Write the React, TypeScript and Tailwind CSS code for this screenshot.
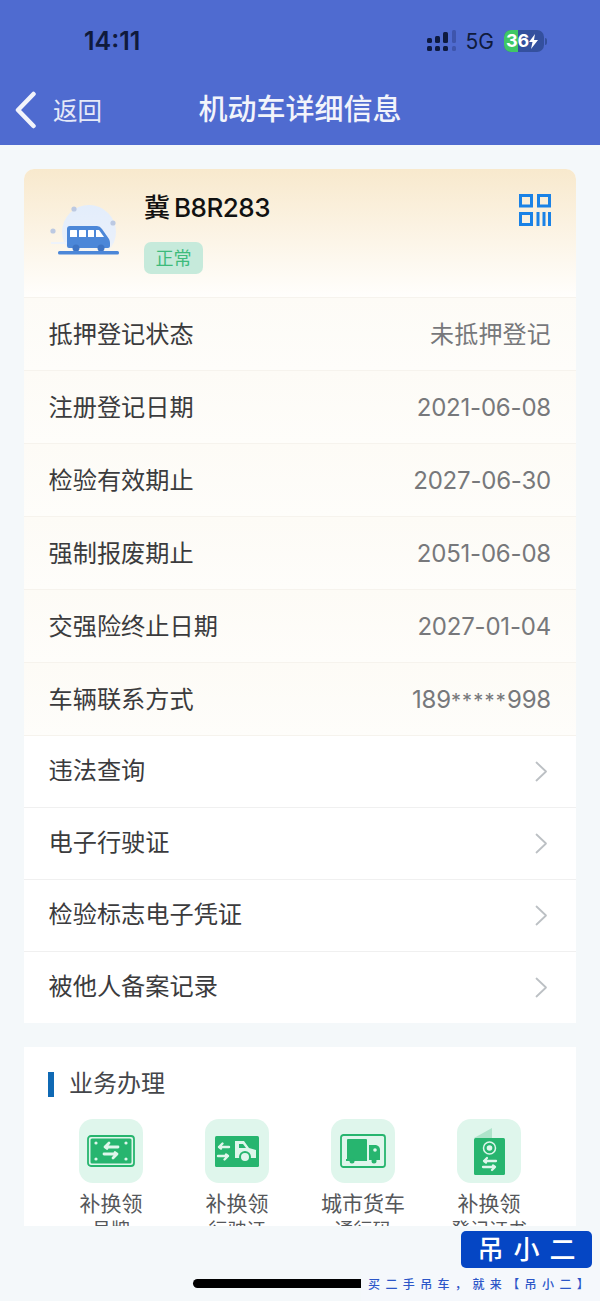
import React from "react";

const cjk = "font-['Inter','Noto_Sans_CJK_SC',sans-serif]";

function Chevron() {
  return (
    <svg width="13" height="21" viewBox="0 0 13 21" fill="none">
      <path d="M1.500 1.500l9.500 9-9.500 9" stroke="#bcc0c4" strokeWidth="1.800" strokeLinecap="round" strokeLinejoin="round" />
    </svg>
  );
}

function InfoRow({ label, value }: { label: string; value: React.ReactNode }) {
  return (
    <div className="flex items-center justify-between pl-[24.500px] pr-[25px] pt-[2px] h-[73px] border-b border-[#f6f3ed] bg-gradient-to-b from-[#fdfbf6] to-[#fefdfa]">
      <span className="text-[24.200px] text-[#3b3b3d]">{label}</span>
      <span className="text-[24px] text-[#77787b] tracking-[-0.200px]">{value}</span>
    </div>
  );
}

function LinkRow({ label, last }: { label: string; last?: boolean }) {
  return (
    <div className={`flex items-center justify-between pl-[24.500px] pr-[28px] ${last ? "h-[71px]" : "h-[72px] border-b border-[#f0f0f0]"}`}>
      <span className="text-[24.200px] text-[#3b3b3d]">{label}</span>
      <Chevron />
    </div>
  );
}

function Bus() {
  return (
    <svg width="80" height="64" viewBox="0 0 80 64">
      <defs>
        <linearGradient id="halo" x1="0" y1="0" x2="0" y2="1">
          <stop offset="0" stopColor="#e3edfb" />
          <stop offset="0.7" stopColor="#e9f0fb" />
          <stop offset="1" stopColor="#fdf8ef" stopOpacity="0" />
        </linearGradient>
      </defs>
      <circle cx="42" cy="27" r="27" fill="url(#halo)" />
      <rect x="4" y="37" width="30" height="2" fill="#eef3fb" />
      <circle cx="27" cy="4" r="2.600" fill="#bcc9e2" />
      <circle cx="6" cy="26" r="2.600" fill="#bcc9e2" />
      <circle cx="66" cy="18" r="2.600" fill="#bcc9e2" />
      <path d="M20 24q0-3 3-3h27q3 0 5 3l7 10q1 2 1 4v3q0 2-2 2H22q-2 0-2-2z" fill="#4c87d8" />
      <rect x="23" y="25" width="7" height="7" fill="#fff" rx="0.500" />
      <rect x="32" y="25" width="7" height="7" fill="#fff" rx="0.500" />
      <rect x="41" y="25" width="6" height="7" fill="#fff" rx="0.500" />
      <path d="M49 25h3l5 7h-8z" fill="#fff" />
      <circle cx="29" cy="43" r="3.500" fill="#3e74c4" />
      <circle cx="54" cy="43" r="3.500" fill="#3e74c4" />
      <rect x="11" y="46" width="61" height="3.500" rx="1.500" fill="#4c87d8" />
    </svg>
  );
}

function Qr() {
  return (
    <svg width="32" height="32" viewBox="0 0 32 32" fill="none">
      <g stroke="#1a82e6" strokeWidth="3">
        <rect x="1.500" y="1.500" width="11" height="10.500" />
        <rect x="19.500" y="1.500" width="11" height="10.500" />
        <rect x="1.500" y="19.500" width="11" height="11" />
        <path d="M19 18v14M25 18v14M30.500 18v14" />
      </g>
    </svg>
  );
}

const Plate = ({ children }: { children: React.ReactNode }) => (
  <div className="w-[64px] h-[64px] rounded-[14px] bg-[#dff6ec] flex items-center justify-center">{children}</div>
);

const G = "#27b56f";

function Icon1() {
  return (
    <svg width="48" height="32" viewBox="0 0 48 32">
      <rect x="1" y="1" width="46" height="30" rx="3" fill="none" stroke={G} strokeWidth="1.800" />
      <rect x="3.500" y="3.500" width="41" height="25" rx="1.500" fill={G} />
      <g fill="#dff6ec">
        <circle cx="9" cy="8" r="1.600" />
        <circle cx="39" cy="8" r="1.600" />
        <circle cx="9" cy="24" r="1.600" />
        <circle cx="39" cy="24" r="1.600" />
      </g>
      <path d="M31 12H18M22 8l-4 4 2 1.500M17 19h13M26 23l4-4-2-1.500" stroke="#dff6ec" strokeWidth="2.800" fill="none" strokeLinecap="round" strokeLinejoin="round" />
    </svg>
  );
}
function Icon2() {
  return (
    <svg width="44" height="31" viewBox="0 0 44 31">
      <rect width="44" height="31" rx="1.500" fill={G} />
      <path d="M14 11H4M7.500 7.500L4 11l2 1.500M3 20h10M9.500 23.500L13 20l-2-1.500" stroke="#dff6ec" strokeWidth="2.400" fill="none" strokeLinecap="round" strokeLinejoin="round" />
      <path d="M20 22V5h9l5 7 7 2v8z" fill="#dff6ec" />
      <path d="M24 12V8h4l3 4z" fill={G} />
      <circle cx="30" cy="21" r="6" fill={G} />
      <circle cx="30" cy="21" r="4" fill="#dff6ec" />
    </svg>
  );
}
function Icon3() {
  return (
    <svg width="46" height="34" viewBox="0 0 46 34">
      <rect x="1" y="1" width="44" height="32" rx="2.500" fill="none" stroke={G} strokeWidth="1.800" />
      <rect x="7" y="5" width="20" height="21" rx="1" fill={G} />
      <path d="M29 11h7q4 1 4 5v10H29z" fill={G} />
      <circle cx="35" cy="16" r="1.800" fill="#dff6ec" />
      <rect x="6" y="25" width="21" height="2" fill={G} />
      <circle cx="12" cy="27" r="2.500" fill={G} />
      <circle cx="34" cy="27" r="2.500" fill={G} />
    </svg>
  );
}
function Icon4() {
  return (
    <svg width="31" height="47" viewBox="0 0 31 47">
      <path d="M0 10L18 0v11z" fill="#afe4cb" />
      <rect y="10" width="31" height="37" rx="1.500" fill={G} />
      <circle cx="15.500" cy="20" r="6" fill="none" stroke="#dff6ec" strokeWidth="1.500" />
      <circle cx="15.500" cy="20" r="2.800" fill="#dff6ec" />
      <path d="M22 33H10M13 30l-3 3 2 1.500M9 39h12M18 42l3-3-2-1.500" stroke="#dff6ec" strokeWidth="2.300" fill="none" strokeLinecap="round" strokeLinejoin="round" />
    </svg>
  );
}

function Service({ icon, title, sub }: { icon: React.ReactNode; title: string; sub: string }) {
  return (
    <div className="flex flex-col items-center w-[126px]">
      <Plate>{icon}</Plate>
      <div className="mt-[8px] text-[21px] leading-[25px] text-[#55575a] text-center whitespace-nowrap">{title}</div>
      <div className="mt-[3px] text-[19px] leading-[24px] text-[#55575a] text-center whitespace-nowrap">{sub}</div>
    </div>
  );
}

export default function App() {
  return (
    <div className={`relative w-[600px] h-[1301px] overflow-hidden bg-[#f4f8fa] ${cjk}`}>
      <div className="bg-[#4f6bd0] h-[145px] flex flex-col">
        <div className="h-[75px]">
          <div className="flex items-center justify-between pl-[84px] pr-[53px] pt-[26px]">
            <span className="text-[25px] leading-[30px] font-semibold text-[#0f1a3c]">14:11</span>
            <div className="flex items-center">
              <svg width="31" height="22" viewBox="0 0 31 22" fill="#0e1a40">
                <rect x="1" y="8" width="5" height="5" rx="1.500" />
                <rect x="1" y="16" width="5" height="5" rx="1.500" />
                <rect x="9" y="6" width="5" height="7" rx="1.500" />
                <rect x="9" y="16" width="5" height="5" rx="1.500" />
                <rect x="17" y="2" width="5" height="11" rx="1.500" />
                <rect x="17" y="16" width="5" height="5" rx="1.500" />
                <rect x="26" y="0" width="4" height="13" rx="1.500" fill="#3e55ac" />
                <rect x="26" y="16" width="4" height="5" rx="1.500" fill="#3e55ac" />
              </svg>
              <span className="ml-[9px] text-[21px] leading-none text-[#0f1a3c]">5G</span>
              <div className="ml-[10px] w-[40px] h-[22px] rounded-[7px] bg-[#34509e] flex overflow-hidden relative items-center">
                <div className="absolute left-0 top-0 bottom-0 w-[14px] bg-[#3fc765]" />
                <span className="relative pl-[2px] text-[18px] leading-none font-bold text-white">36</span>
                <svg className="relative" width="9" height="15" viewBox="0 0 9 15" fill="#fff">
                  <path d="M6 0L0 8h3.500L2 15l7-9H5z" />
                </svg>
              </div>
              <div className="ml-[1px] w-[2px] h-[7px] rounded-r-[2px] bg-[#34509e]" />
            </div>
          </div>
        </div>
        <div className="relative h-[70px] flex items-center justify-center">
          <div className="absolute left-[15px] top-[16px] flex items-center">
            <svg width="22" height="38" viewBox="0 0 22 38" fill="none">
              <path d="M18.500 3L3 19l15.500 16" stroke="#f2f4fb" strokeWidth="4.500" strokeLinecap="round" strokeLinejoin="round" />
            </svg>
            <span className="ml-[16px] pt-[2px] text-[24.500px] text-[#e5e9f8]">返回</span>
          </div>
          <span className="text-[29px] font-medium text-[#f2f4fb]">机动车详细信息</span>
        </div>
      </div>

      <div className="px-[24px] pt-[24px]">
        <div className="bg-white rounded-t-[10px] overflow-hidden">
          <div className="h-[129px] flex bg-gradient-to-b from-[#f8e9cd] to-[#fffefc] border-b border-[#f6f3ed]">
            <div className="pl-[23px] pt-[36px]">
              <Bus />
            </div>
            <div className="pl-[17px] pt-[20px] flex flex-col items-start">
              <span className="flex items-baseline text-[26px] leading-[38px] font-medium text-[#111]">
                冀<span className="ml-[4px] tracking-[-0.500px]">B8R283</span>
              </span>
              <span className="mt-[15px] w-[59px] h-[32px] rounded-[7px] bg-[#c6eadb] flex items-center justify-center text-[18px] text-[#3dbb7b]">正常</span>
            </div>
            <div className="ml-auto pt-[25px] pr-[25px]">
              <Qr />
            </div>
          </div>
          <InfoRow label="抵押登记状态" value={<span className="tracking-[0.200px]">未抵押登记</span>} />
          <InfoRow label="注册登记日期" value="2021-06-08" />
          <InfoRow label="检验有效期止" value="2027-06-30" />
          <InfoRow label="强制报废期止" value="2051-06-08" />
          <InfoRow label="交强险终止日期" value="2027-01-04" />
          <InfoRow
            label="车辆联系方式"
            value={
              <>
                189<span className="text-[20px] tracking-[1.200px]">*****</span>998
              </>
            }
          />
          <LinkRow label="违法查询" />
          <LinkRow label="电子行驶证" />
          <LinkRow label="检验标志电子凭证" />
          <LinkRow label="被他人备案记录" last />
        </div>

        <div className="mt-[24px] h-[179px] bg-white overflow-hidden">
          <div className="flex items-center pl-[24px] pt-[21px]">
            <div className="w-[6px] h-[25px] bg-[#0f69b4]" />
            <span className="ml-[15px] text-[24px] leading-[32px] text-[#44464a]">业务办理</span>
          </div>
          <div className="pl-[24px] pt-[19px] flex">
            <Service icon={<Icon1 />} title="补换领" sub="号牌" />
            <Service icon={<Icon2 />} title="补换领" sub="行驶证" />
            <Service icon={<Icon3 />} title="城市货车" sub="通行码" />
            <Service icon={<Icon4 />} title="补换领" sub="登记证书" />
          </div>
        </div>
      </div>

      <div className="absolute left-[193px] top-[1279px] w-[180px] h-[9px] rounded-full bg-black" />

      <div className="absolute left-[361px] top-[1270px] w-[239px] h-[31px] bg-[#f5f8fc]" />
      <div className="absolute left-[461px] top-[1231px] w-[131px] h-[37px] rounded-[5px] bg-[#0546c4] flex items-center justify-center text-[26px] leading-none font-medium text-white tracking-[10px] pl-[10px]">
        吊小二
      </div>
      <div className="absolute left-[368px] top-[1277px] text-[12px] leading-[16px] font-medium text-[#2c56c8] tracking-[5.400px] whitespace-nowrap">
        买二手吊车，就来【吊小二】
      </div>
    </div>
  );
}
